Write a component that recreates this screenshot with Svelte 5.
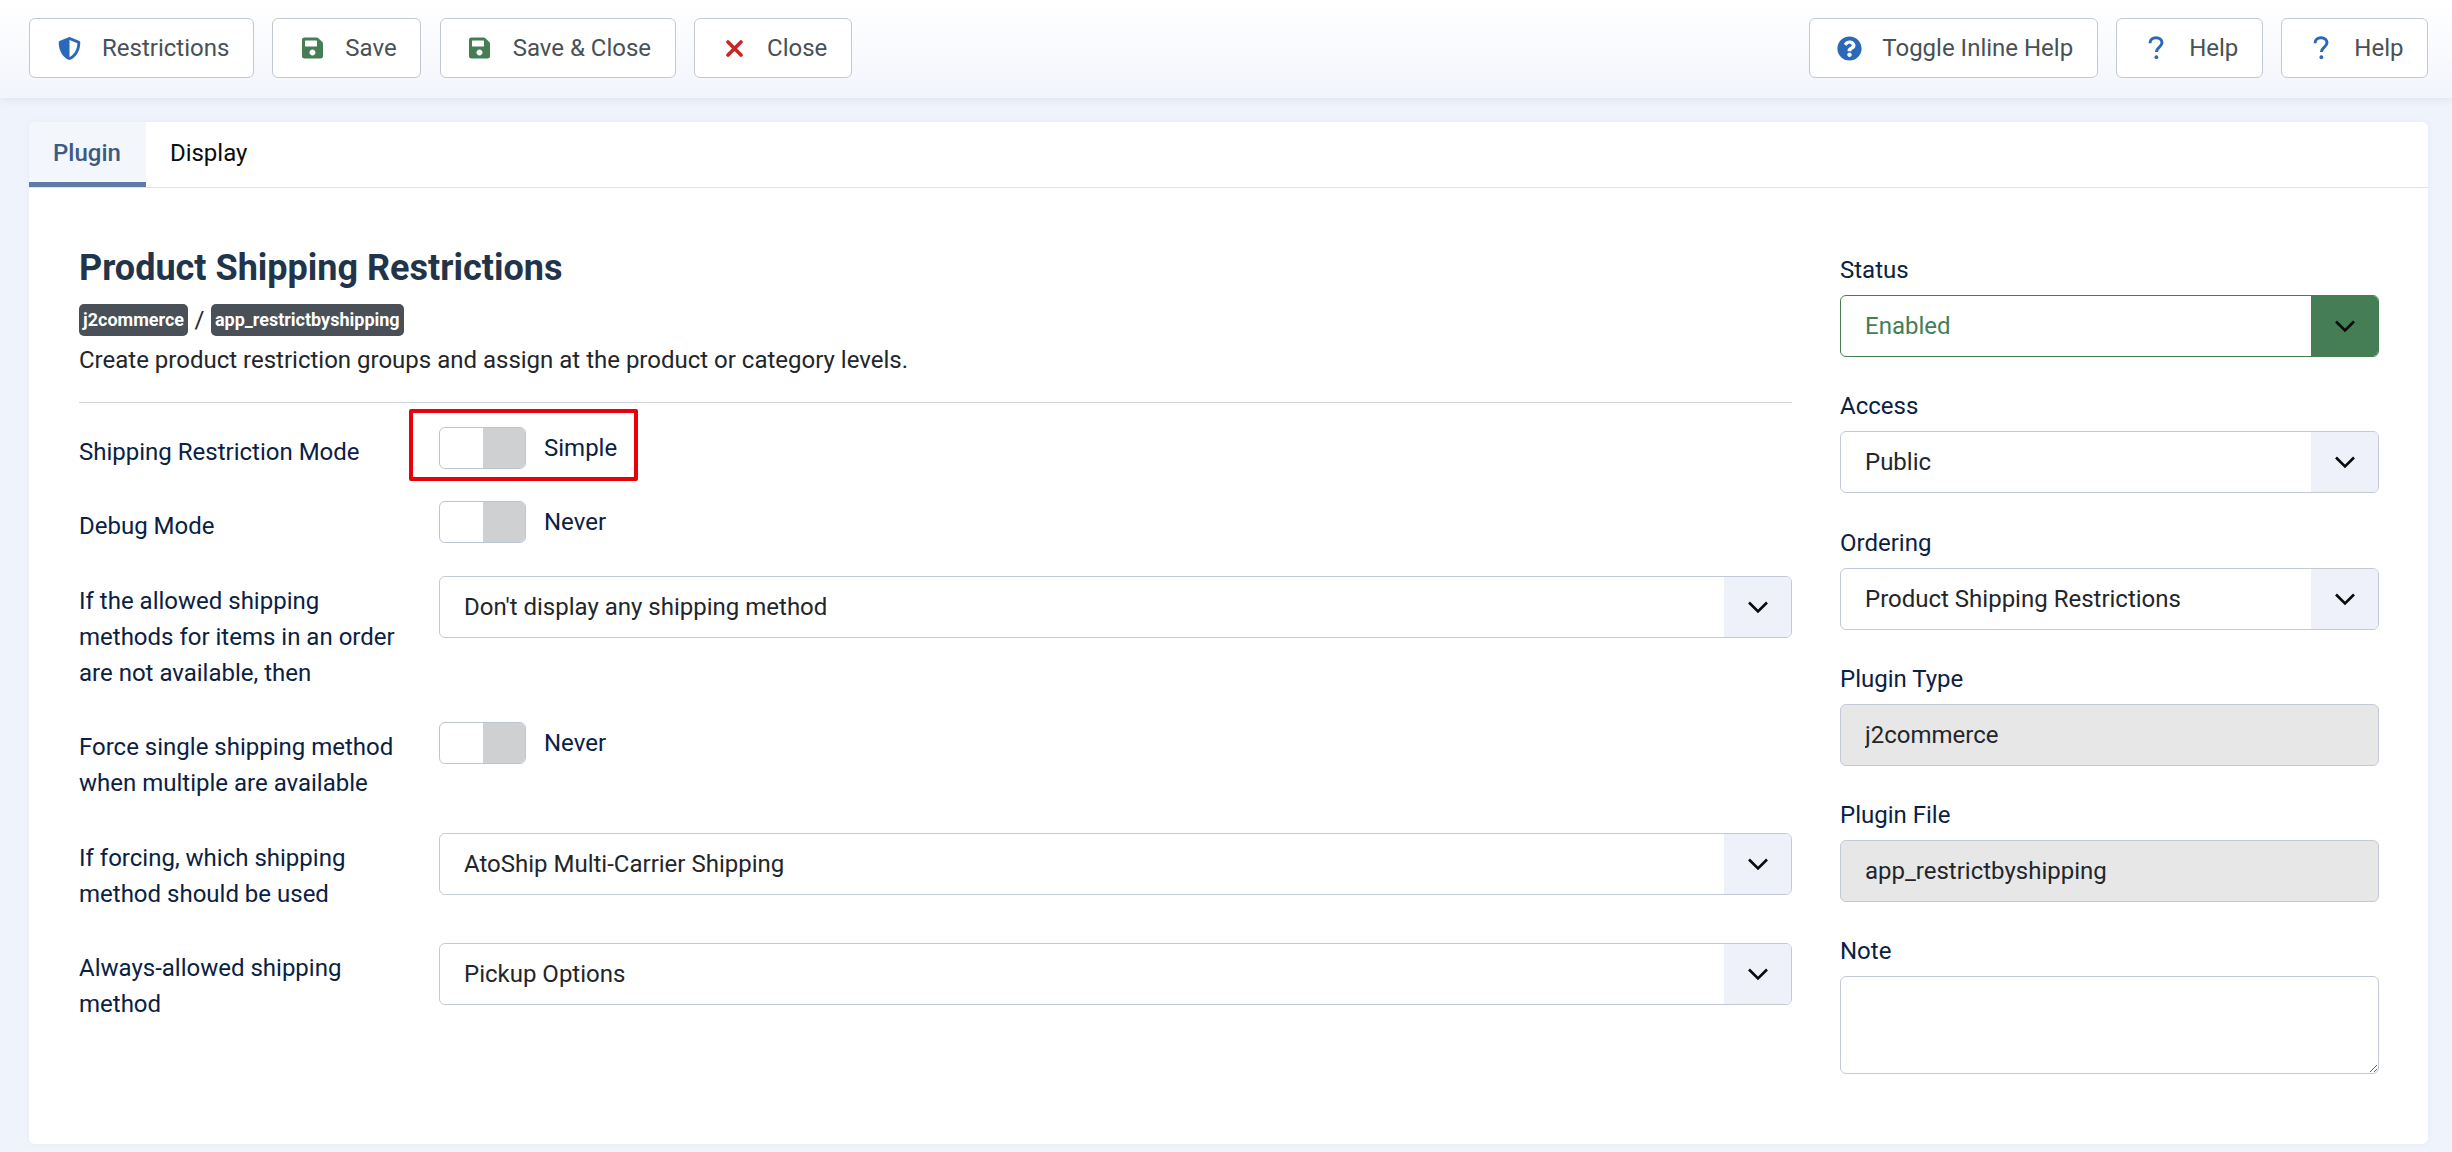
<script>
  const save = "M433.941 129.941l-83.882-83.882A48 48 0 0 0 316.118 32H48C21.49 32 0 53.49 0 80v352c0 26.51 21.49 48 48 48h352c26.51 0 48-21.49 48-48V163.882a48 48 0 0 0-14.059-33.941zM224 416c-35.346 0-64-28.654-64-64 0-35.346 28.654-64 64-64s64 28.654 64 64c0 35.346-28.654 64-64 64zm96-304.52V212c0 6.627-5.373 12-12 12H76c-6.627 0-12-5.373-12-12V108c0-6.627 5.373-12 12-12h228.52c3.183 0 6.235 1.264 8.485 3.515l3.48 3.48A11.996 11.996 0 0 1 320 111.48z";
  const shield = "M466.5 83.7l-192-80a48.15 48.15 0 0 0-36.9 0l-192 80C27.7 91.1 16 108.6 16 128c0 198.5 114.5 335.7 221.5 380.3 11.8 4.9 25.1 4.9 36.9 0C360.1 472.6 496 349.3 496 128c0-19.4-11.7-36.9-29.5-44.3zM256.1 446.3l-.1-381 175.9 73.3c-3.3 151.4-82.1 261.1-175.8 307.7z";
  const circle = "M504 256c0 136.997-111.043 248-248 248S8 392.997 8 256C8 119.083 119.043 8 256 8s248 111.083 248 248zM262.655 90c-54.497 0-89.255 22.957-116.549 63.758-3.536 5.286-2.353 12.415 2.715 16.258l34.699 26.31c5.205 3.947 12.621 3.008 16.665-2.122 17.864-22.658 30.113-35.797 57.303-35.797 20.429 0 45.698 13.148 45.698 32.958 0 14.976-12.363 22.667-32.534 33.976C247.128 238.528 216 254.941 216 296v4c0 6.627 5.373 12 12 12h56c6.627 0 12-5.373 12-12v-1.333c0-28.462 83.186-29.647 83.186-106.667 0-58.002-60.165-102-116.531-102zM256 338c-25.365 0-46 20.635-46 46 0 25.364 20.635 46 46 46s46-20.636 46-46c0-25.365-20.635-46-46-46z";
</script>

{#snippet chevron()}
  <svg class="chev" viewBox="0 0 22 14" aria-hidden="true"><path d="M2 2.5 L11 11.5 L20 2.5" /></svg>
{/snippet}

{#snippet select(value, cls = '')}
  <div class="select {cls}">
    <select><option>{value}</option></select>
    <span class="caret">{@render chevron()}</span>
  </div>
{/snippet}

{#snippet toggle(value, marked = false)}
  <div class="switch-row">
    <span class="switch"><span class="on"></span><span class="off"></span></span>
    <span class="switch-text">{value}</span>
    {#if marked}<span class="callout"></span>{/if}
  </div>
{/snippet}

<header class="toolbar">
  <div class="group group-left">
    <button class="btn">
      <span class="ico"><svg class="blue" width="23" height="23" viewBox="0 0 512 512"><path d={shield} /></svg></span>Restrictions
    </button>
    <button class="btn">
      <span class="ico"><svg class="green" width="21" height="24" viewBox="0 0 448 512"><path d={save} /></svg></span>Save
    </button>
    <button class="btn">
      <span class="ico"><svg class="green" width="21" height="24" viewBox="0 0 448 512"><path d={save} /></svg></span>Save &amp; Close
    </button>
    <button class="btn">
      <span class="ico"><svg class="cross" width="17" height="17" viewBox="0 0 17 17"><path d="M2 2 L15 15 M15 2 L2 15" /></svg></span>Close
    </button>
  </div>
  <div class="group group-right">
    <button class="btn">
      <span class="ico"><svg class="blue" width="25" height="25" viewBox="0 0 512 512"><path d={circle} /></svg></span>Toggle Inline Help
    </button>
    <button class="btn">
      <span class="ico"><svg class="q" width="16" height="24" viewBox="0 0 16 24"><path d="M2 7.2 C2 3.6 4.6 1.7 8 1.7 C11.5 1.7 14 3.7 14 6.8 C14 11 8.4 11.2 8.4 16" /><circle cx="8.4" cy="21.2" r="1.9" /></svg></span>Help
    </button>
    <button class="btn">
      <span class="ico"><svg class="q" width="16" height="24" viewBox="0 0 16 24"><path d="M2 7.2 C2 3.6 4.6 1.7 8 1.7 C11.5 1.7 14 3.7 14 6.8 C14 11 8.4 11.2 8.4 16" /><circle cx="8.4" cy="21.2" r="1.9" /></svg></span>Help
    </button>
  </div>
</header>

<main class="card">
  <nav class="tabs">
    <span class="tab active">Plugin</span>
    <span class="tab">Display</span>
  </nav>
  <div class="columns">
    <section class="left">
      <h1>Product Shipping Restrictions</h1>
      <div class="badges"><span class="badge">j2commerce</span><span class="slash">/</span><span class="badge">app_restrictbyshipping</span></div>
      <p class="desc">Create product restriction groups and assign at the product or category levels.</p>
      <hr />
      <div class="row">
        <label>Shipping Restriction Mode</label>
        {@render toggle('Simple', true)}
      </div>
      <div class="row">
        <label>Debug Mode</label>
        {@render toggle('Never')}
      </div>
      <div class="row">
        <label>If the allowed shipping methods for items in an order are not available, then</label>
        {@render select("Don't display any shipping method")}
      </div>
      <div class="row">
        <label>Force single shipping method when multiple are available</label>
        {@render toggle('Never')}
      </div>
      <div class="row">
        <label>If forcing, which shipping method should be used</label>
        {@render select('AtoShip Multi-Carrier Shipping')}
      </div>
      <div class="row">
        <label>Always-allowed shipping method</label>
        {@render select('Pickup Options')}
      </div>
    </section>
    <aside class="right">
      <div class="field"><label>Status</label>{@render select('Enabled', 'success')}</div>
      <div class="field"><label>Access</label>{@render select('Public')}</div>
      <div class="field"><label>Ordering</label>{@render select('Product Shipping Restrictions')}</div>
      <div class="field"><label>Plugin Type</label><input class="ro" value="j2commerce" readonly /></div>
      <div class="field"><label>Plugin File</label><input class="ro" value="app_restrictbyshipping" readonly /></div>
      <div class="field"><label>Note</label><textarea></textarea></div>
    </aside>
  </div>
</main>

<style>
  :global(body) {
    margin: 0;
    background: #eff3fb;
    font-family: Roboto, "Liberation Sans", sans-serif;
    font-size: 24px;
    line-height: 36px;
    color: #22262a;
    min-height: 1152px;
  }
  .toolbar {
    display: flex;
    justify-content: space-between;
    height: 98px;
    box-sizing: border-box;
    padding: 18px 24px 0 29px;
    background: linear-gradient(180deg, #ffffff 0%, #f2f5fb 100%);
    box-shadow: 0 1px 8px rgba(50, 70, 110, 0.1);
  }
  .group { display: flex; }
  .group-left { gap: 18.5px; }
  .group-right { gap: 18.5px; }
  .btn {
    display: flex;
    align-items: center;
    height: 60px;
    box-sizing: border-box;
    padding: 0 23.5px 0 25px;
    background: #fff;
    border: 1.5px solid #c3c9d0;
    border-radius: 6px;
    font: inherit;
    color: #495057;
    white-space: nowrap;
  }
  .ico {
    display: flex;
    align-items: center;
    justify-content: center;
    width: 28px;
    margin-right: 19px;
  }
  .blue { fill: #2a69b8; }
  .green { fill: #457d54; }
  .cross { fill: none; stroke: #c52827; stroke-width: 3.6; stroke-linecap: round; }
  .q { fill: #2a69b8; }
  .q path { fill: none; stroke: #2a69b8; stroke-width: 3; }

  .card {
    margin: 24px 24px 0 29px;
    height: 1022px;
    box-sizing: border-box;
    background: #fff;
    border-radius: 6px;
    box-shadow: 0 0 6px rgba(60, 80, 130, 0.05);
  }
  .tabs {
    display: flex;
    height: 66px;
    box-sizing: border-box;
    border-bottom: 1.5px solid #dfe3e7;
  }
  .tab {
    display: flex;
    align-items: center;
    padding: 0 24px 3px;
    color: #0c0c0c;
  }
  .tab.active {
    background: #f3f6fb;
    color: #3d5a80;
    font-weight: 500;
    padding-right: 25px;
    box-shadow: inset 0 -5px 0 #5d7ba4;
    border-radius: 6px 0 0 0;
  }
  .columns {
    display: flex;
    gap: 48px;
    padding: 59px 49px 0 50px;
  }
  .left { width: 1713px; flex: none; }
  .right { flex: 1; padding-top: 5px; }
  h1 {
    margin: 0 0 14px;
    font-size: 36px;
    line-height: 43px;
    font-weight: 700;
    color: #22344a;
  }
  .badges { display: flex; align-items: center; height: 32px; gap: 6.5px; }
  .badge {
    display: block;
    height: 32px;
    line-height: 32px;
    padding: 0 4px;
    border-radius: 5px;
    background: #495057;
    color: #fff;
    font-size: 18px;
    font-weight: 700;
  }
  .slash { line-height: 26px; }
  .desc { margin: 6px 0 0; }
  hr { margin: 24px 0; border: 0; border-top: 1.5px solid #d3d6da; height: 0; }
  .row {
    display: grid;
    grid-template-columns: 360px 1fr;
    margin-bottom: 31.4px;
    align-items: start;
  }
  label { color: #0a2144; display: block; }
  .row label { padding: 7px 30px 0 0; }
  .field { margin-bottom: 31.3px; }
  .field label { margin-bottom: 7px; }

  .switch-row { display: flex; align-items: center; gap: 18px; height: 42px; position: relative; }
  .switch {
    display: flex;
    width: 87px;
    height: 42px;
    box-sizing: border-box;
    border: 1.5px solid #bcc5d2;
    border-radius: 6px;
    overflow: hidden;
    background: #fff;
  }
  .switch span { flex: 1; }
  .off { background: #cfd0d2; }
  .switch-text { color: #0a2144; }
  .callout {
    position: absolute;
    left: -30px;
    top: -18px;
    width: 229px;
    height: 72px;
    box-sizing: border-box;
    border: 4px solid #e8000b;
    border-radius: 2px;
  }

  .select {
    display: flex;
    height: 62px;
    box-sizing: border-box;
    border: 1.5px solid #c3c9d6;
    border-radius: 6px;
    overflow: hidden;
    background: #fff;
  }
  select {
    flex: 1;
    min-width: 0;
    appearance: none;
    border: 0;
    background: transparent;
    padding: 0 24px;
    font: inherit;
    color: #22262a;
    outline: none;
  }
  .caret {
    display: flex;
    align-items: center;
    justify-content: center;
    width: 67px;
    flex: none;
    background: #eef1fa;
  }
  .chev { width: 22px; height: 14px; fill: none; stroke: #0a0a0a; stroke-width: 2.6; }
  .success { border-color: #457d54; }
  .success select { color: #457d54; }
  .success .caret { background: #457d54; }

  .ro, textarea {
    display: block;
    width: 100%;
    box-sizing: border-box;
    border: 1.5px solid #c3c9d6;
    border-radius: 6px;
    font: inherit;
    color: #22262a;
    outline: none;
  }
  .ro { height: 62px; padding: 0 24px; background: #e7e7e7; }
  textarea { height: 98px; background: #fff; padding: 7px 24px; }
</style>
